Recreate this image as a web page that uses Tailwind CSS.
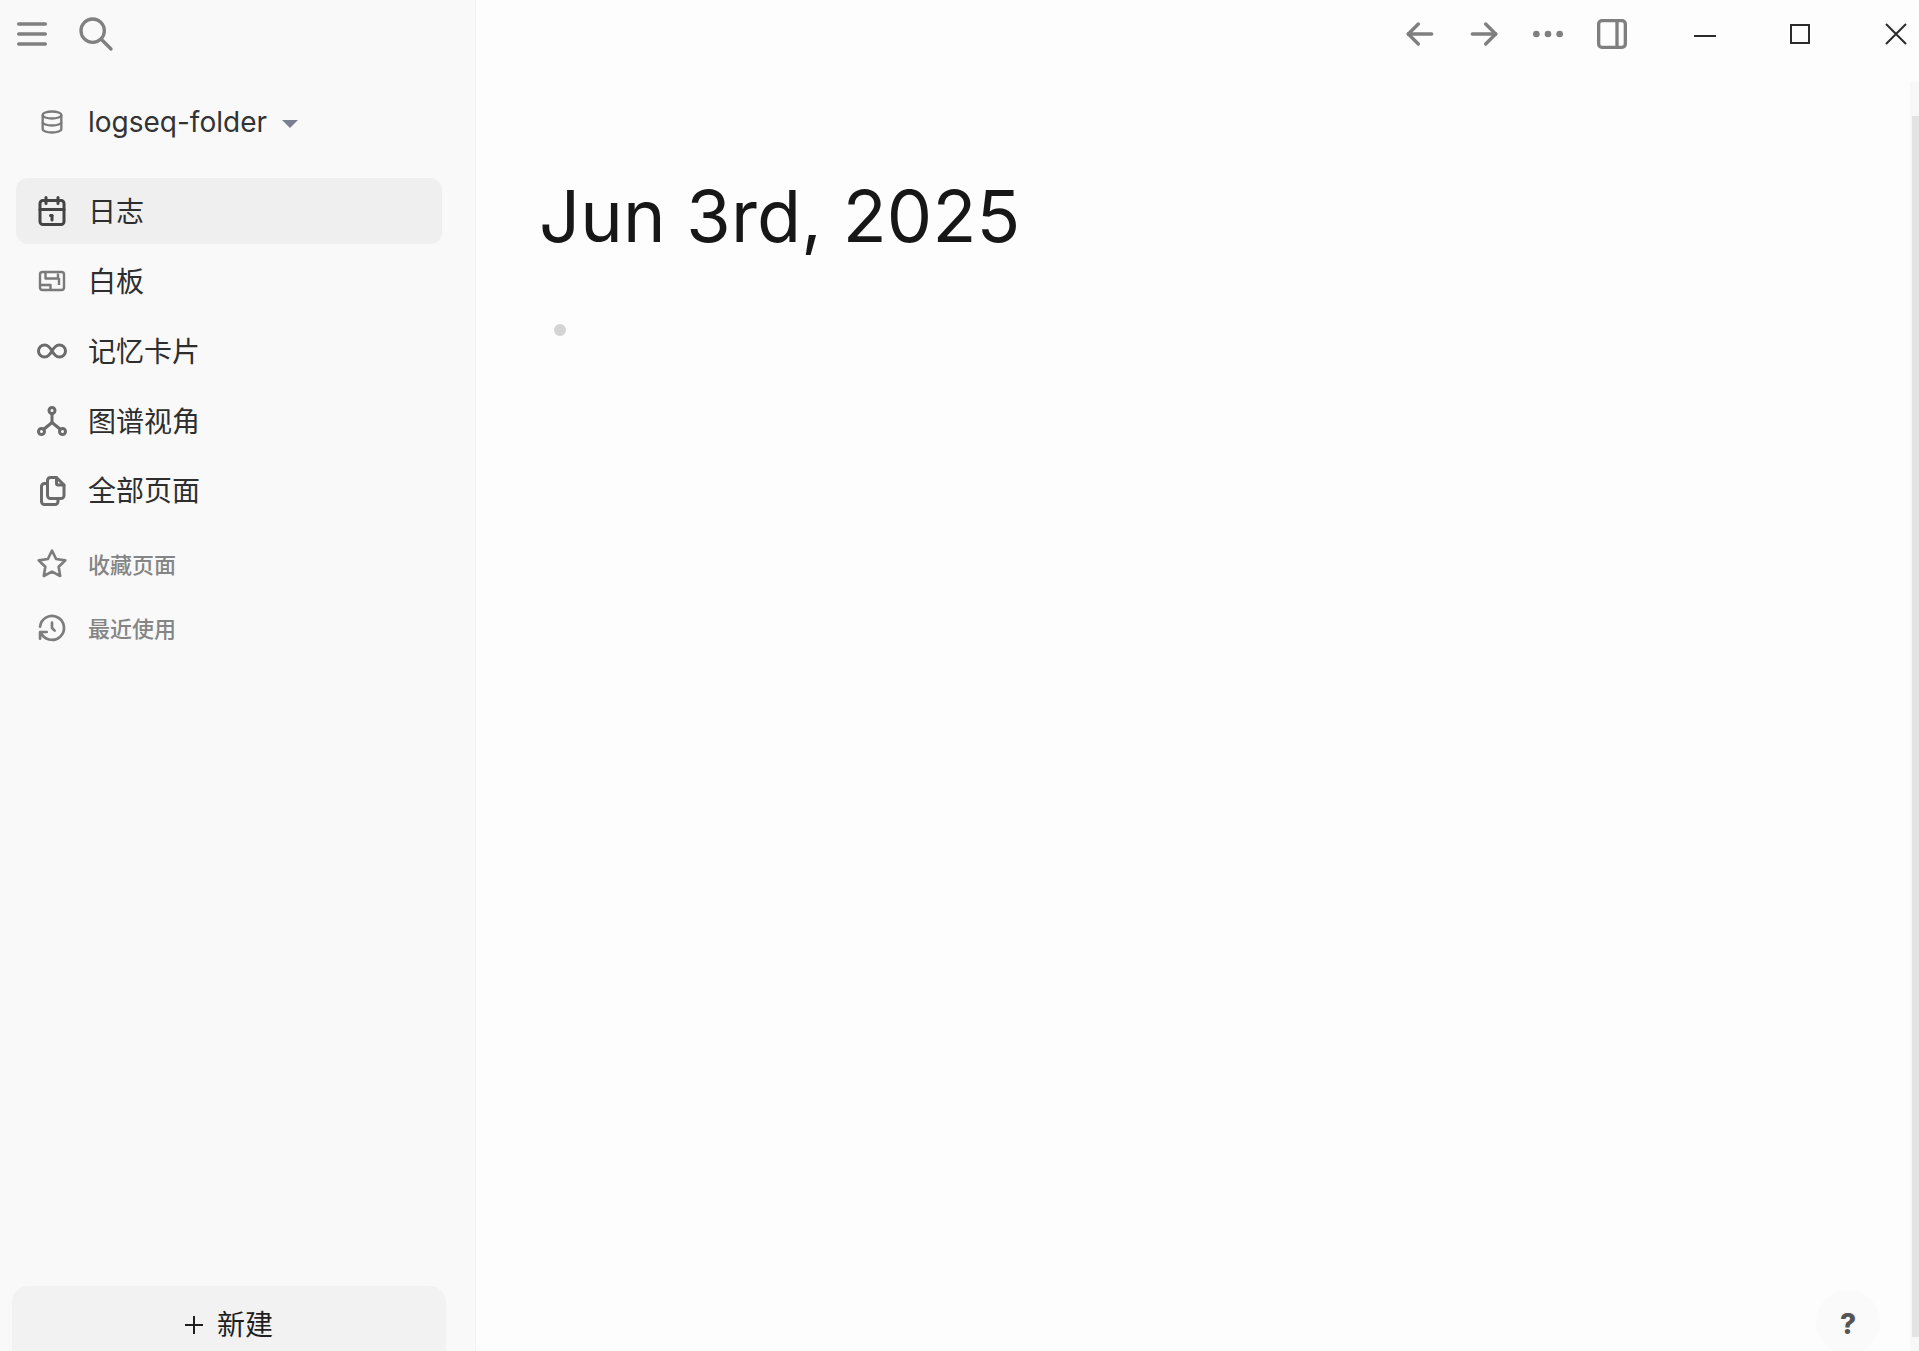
<!DOCTYPE html>
<html lang="en">
<head>
    <meta charset="UTF-8">
    <title>Logseq</title>
    <script src="https://cdn.jsdelivr.net/npm/@tailwindcss/browser@4"></script>
</head>
<body class="h-[1351px] overflow-hidden bg-[#fdfdfd] font-['Inter','Noto_Sans_CJK_SC',sans-serif] text-[#262626]">
<div class="flex h-full">
    <!-- left sidebar -->
    <aside class="w-[476px] h-full shrink-0 bg-[#f9f9f9] border-r border-[#f4f4f4] flex flex-col">
        <div class="h-[68px] flex items-center pl-[12px] gap-[24px] text-[#808080] shrink-0">
            <svg class="w-[40px] h-[40px]" viewBox="0 0 24 24" fill="none" stroke="currentColor" stroke-width="2" stroke-linecap="round"><path d="M4 6h16M4 12h16M4 18h16"/></svg>
            <svg class="w-[40px] h-[40px]" viewBox="0 0 24 24" fill="none" stroke="currentColor" stroke-width="2" stroke-linecap="round"><path d="M10 10m-7 0a7 7 0 1 0 14 0a7 7 0 1 0 -14 0"/><path d="M21 21l-6 -6"/></svg>
        </div>
        <div class="h-[54px] mt-[27px] flex items-center pl-[38px] shrink-0">
            <svg class="w-[28px] h-[28px] text-[#7a7a7a]" viewBox="0 0 24 24" fill="none" stroke="currentColor" stroke-width="2"><path d="M12 6m-8 0a8 3 0 1 0 16 0a8 3 0 1 0 -16 0"/><path d="M4 6v6a8 3 0 0 0 16 0v-6"/><path d="M4 12v6a8 3 0 0 0 16 0v-6"/></svg>
            <span class="ml-[22px] text-[28px] leading-none text-[#333333]">logseq-folder</span>
            <span class="ml-[15px] mt-[3px] w-0 h-0 border-x-[8px] border-x-transparent border-t-[8px] border-t-[#7b7f92]"></span>
        </div>
        <nav class="pl-[16px] pr-[33px] mt-[29px] flex flex-col gap-[4px] text-[28px] text-[#2e2e2e] shrink-0">
            <a class="h-[66px] rounded-[12px] bg-[#efefef] flex items-center pl-[18px] gap-[18px]">
                <svg class="w-[36px] h-[36px] text-[#444444]" viewBox="0 0 24 24" fill="none" stroke="currentColor" stroke-width="2" stroke-linecap="round" stroke-linejoin="round"><path d="M4 7a2 2 0 0 1 2 -2h12a2 2 0 0 1 2 2v12a2 2 0 0 1 -2 2h-12a2 2 0 0 1 -2 -2v-12z"/><path d="M16 3v4"/><path d="M8 3v4"/><path d="M4 11h16"/><path d="M11 15h1"/><path d="M12 15v3"/></svg>
                <span class="mt-[2px]">日志</span>
            </a>
            <a class="h-[66px] flex items-center pl-[18px] gap-[18px]">
                <svg class="w-[36px] h-[36px] text-[#7a7a7a]" viewBox="0 0 36 36" fill="none" stroke="currentColor" stroke-width="2.4" stroke-linejoin="round"><rect x="6" y="9" width="24" height="18" rx="2.5"/><path d="M11.5 9V15.5H24V10.5M25 15V22M6 22H16.5V27"/></svg>
                <span class="mt-[2px]">白板</span>
            </a>
            <a class="h-[66px] flex items-center pl-[18px] gap-[18px]">
                <svg class="w-[36px] h-[36px] text-[#6b6b6b]" viewBox="0 0 24 24" fill="none" stroke="currentColor" stroke-width="2" stroke-linecap="round" stroke-linejoin="round"><path d="M9.828 9.172a4 4 0 1 0 0 5.656a10 10 0 0 0 2.172 -2.828a10 10 0 0 1 2.172 -2.828a4 4 0 1 1 0 5.656a10 10 0 0 1 -2.172 -2.828a10 10 0 0 0 -2.172 -2.828"/></svg>
                <span class="mt-[2px]">记忆卡片</span>
            </a>
            <a class="h-[66px] flex items-center pl-[18px] gap-[18px]">
                <svg class="w-[36px] h-[36px] text-[#6b6b6b]" viewBox="0 0 24 24" fill="none" stroke="currentColor" stroke-width="2" stroke-linecap="round" stroke-linejoin="round"><path d="M12 5m-2 0a2 2 0 1 0 4 0a2 2 0 1 0 -4 0"/><path d="M5 19m-2 0a2 2 0 1 0 4 0a2 2 0 1 0 -4 0"/><path d="M19 19m-2 0a2 2 0 1 0 4 0a2 2 0 1 0 -4 0"/><path d="M6.5 17.5l5.5 -4.5l5.5 4.5"/><path d="M12 7l0 6"/></svg>
                <span class="mt-[2px]">图谱视角</span>
            </a>
            <a class="h-[66px] flex items-center pl-[18px] gap-[18px]">
                <svg class="w-[36px] h-[36px] text-[#6b6b6b]" viewBox="0 0 24 24" fill="none" stroke="currentColor" stroke-width="2" stroke-linecap="round" stroke-linejoin="round"><path d="M15 3v4a1 1 0 0 0 1 1h4"/><path d="M18 17h-7a2 2 0 0 1 -2 -2v-10a2 2 0 0 1 2 -2h4l5 5v7a2 2 0 0 1 -2 2z"/><path d="M16 17v2a2 2 0 0 1 -2 2h-7a2 2 0 0 1 -2 -2v-10a2 2 0 0 1 2 -2h2"/></svg>
                <span>全部页面</span>
            </a>
        </nav>
        <div class="px-[16px] mt-[8px] flex flex-col text-[22px] font-medium text-[#858585] shrink-0">
            <a class="h-[64px] flex items-center pl-[20px] gap-[20px]">
                <svg class="w-[32px] h-[32px] text-[#7d7d7d]" viewBox="0 0 24 24" fill="none" stroke="currentColor" stroke-width="2" stroke-linecap="round" stroke-linejoin="round"><path d="M12 17.75l-6.172 3.245l1.179 -6.873l-5 -4.867l6.9 -1l3.086 -6.253l3.086 6.253l6.9 1l-5 4.867l1.179 6.873z"/></svg>
                <span class="mt-[3px]">收藏页面</span>
            </a>
            <a class="h-[64px] flex items-center pl-[20px] gap-[20px]">
                <svg class="w-[32px] h-[32px] text-[#7d7d7d]" viewBox="0 0 24 24" fill="none" stroke="currentColor" stroke-width="2" stroke-linecap="round" stroke-linejoin="round"><path d="M12 8l0 4l2 2"/><path d="M3.05 11a9 9 0 1 1 .5 4m-.5 5v-5h5"/></svg>
                <span class="mt-[2px]">最近使用</span>
            </a>
        </div>
        <div class="mt-auto ml-[12px] mr-[29px] h-[65px] rounded-t-[16px] bg-[#f2f2f2] flex items-start justify-center pt-[20px] gap-[14px] text-[28px] leading-[38px] text-[#1f1f1f]">
            <svg class="w-[18px] h-[18px] mt-[10px]" viewBox="0 0 18 18" stroke="currentColor" stroke-width="2"><path d="M0 9H18M9 0V18"/></svg>
            <span>新建</span>
        </div>
    </aside>

    <!-- main -->
    <main class="relative flex-1 min-w-0">
        <div class="h-[68px] flex items-center justify-end text-[#7f7f7f]">
            <div class="flex items-center gap-[24px]">
                <svg class="w-[40px] h-[40px]" viewBox="0 0 24 24" fill="none" stroke="currentColor" stroke-width="2" stroke-linecap="round" stroke-linejoin="round"><path d="M5 12l14 0"/><path d="M5 12l6 6"/><path d="M5 12l6 -6"/></svg>
                <svg class="w-[40px] h-[40px]" viewBox="0 0 24 24" fill="none" stroke="currentColor" stroke-width="2" stroke-linecap="round" stroke-linejoin="round"><path d="M5 12l14 0"/><path d="M13 18l6 -6"/><path d="M13 6l6 6"/></svg>
                <svg class="w-[40px] h-[40px]" viewBox="0 0 24 24" fill="currentColor" stroke="currentColor" stroke-width="2"><circle cx="5" cy="12" r="1"/><circle cx="12" cy="12" r="1"/><circle cx="19" cy="12" r="1"/></svg>
                <svg class="w-[40px] h-[40px]" viewBox="0 0 24 24" fill="none" stroke="currentColor" stroke-width="2" stroke-linecap="round" stroke-linejoin="round"><path d="M4 4m0 2a2 2 0 0 1 2 -2h12a2 2 0 0 1 2 2v12a2 2 0 0 1 -2 2h-12a2 2 0 0 1 -2 -2z"/><path d="M15 4l0 16"/></svg>
            </div>
            <svg class="ml-[62px] w-[22px] h-[4px] mt-[3px] text-[#2b2b2b]" viewBox="0 0 22 4" stroke="currentColor" stroke-width="2"><path d="M0 2H22"/></svg>
            <svg class="ml-[74px] w-[20px] h-[20px] text-[#2b2b2b]" viewBox="0 0 20 20" fill="none" stroke="currentColor" stroke-width="2"><rect x="1" y="1" width="18" height="18"/></svg>
            <svg class="ml-[75px] mr-[12px] w-[22px] h-[22px] text-[#2b2b2b]" viewBox="0 0 22 22" stroke="currentColor" stroke-width="2"><path d="M1 1L21 21M21 1L1 21"/></svg>
        </div>
        <div class="pl-[63px] pt-[112px]">
            <h1 class="text-[72px] leading-[1] font-normal tracking-[0.2px] text-[#171717]">Jun 3rd, 2025</h1>
            <div class="ml-[15px] mt-[72px] w-[12px] h-[12px] rounded-full bg-[#d4d4d4]"></div>
        </div>
        <!-- scrollbar -->
        <div class="absolute right-0 top-[82px] bottom-0 w-[9px] bg-[#f8f8f8]">
            <div class="ml-[2px] mt-[34px] w-[7px] h-[1221px] bg-[#e3e3e3]"></div>
        </div>
        <!-- help -->
        <div class="absolute right-[39px] bottom-[-3px] w-[64px] h-[64px] rounded-full bg-[#fafafa] flex items-center justify-center pt-[4px] text-[28px] font-extrabold text-[#555555]">?</div>
    </main>
</div>
</body>
</html>
